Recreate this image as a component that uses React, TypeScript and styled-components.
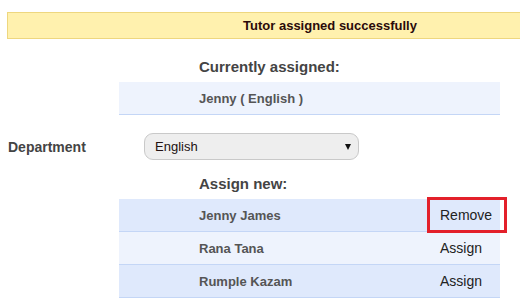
import React from 'react';
import styled, { createGlobalStyle } from 'styled-components';

const GlobalStyle = createGlobalStyle`
    html, body {
        margin: 0;
        padding: 0;
        background: #ffffff;
        overflow: hidden;
        font-family: "Liberation Sans", Arial, sans-serif;
    }
`;

const Page = styled.div`
    padding: 12px 0 0 7px;
    width: 520px;
    box-sizing: border-box;
`;

const Banner = styled.div`
    height: 25px;
    line-height: 25px;
    padding-left: 132px;
    background: #fff1ae;
    border: 1px solid #eed77f;
    border-right: none;
    text-align: center;
    font-size: 13px;
    font-weight: bold;
    color: #2a0a0a;
`;

const Block = styled.div<{ $top: number }>`
    margin: ${p => p.$top}px 0 0 112px;
    width: 381px;
`;

const Heading = styled.h3`
    margin: 0 0 7px 80px;
    font-size: 15px;
    line-height: 17px;
    font-weight: bold;
    color: #444444;
`;

const Row = styled.div<{ $shade: 'light' | 'dark' }>`
    display: flex;
    align-items: center;
    height: 32px;
    border-bottom: 1px solid #c4d6f6;
    background: ${p => (p.$shade === 'dark' ? '#dfe9fc' : '#eef3fd')};
`;

const Name = styled.span`
    flex-shrink: 0;
    width: 231px;
    padding-left: 80px;
    font-size: 13px;
    font-weight: bold;
    color: #555555;
`;

const Action = styled.button<{ $marked?: boolean }>`
    flex-shrink: 0;
    width: 74px;
    height: 30px;
    padding: 0 0 0 10px;
    margin-top: -1px;
    text-align: left;
    border: none;
    background: transparent;
    outline: ${p => (p.$marked ? '3px solid #e3202a' : 'none')};
    font-family: "Liberation Sans", Arial, sans-serif;
    font-size: 14px;
    color: #222222;
    cursor: pointer;
`;

const DeptRow = styled.div`
    display: flex;
    align-items: center;
    margin-top: 18px;
    margin-left: 1px;
`;

const DeptLabel = styled.label`
    width: 136px;
    font-size: 14px;
    font-weight: bold;
    color: #444444;
`;

const SelectWrap = styled.div`
    position: relative;
    width: 215px;
`;

const Select = styled.select`
    appearance: none;
    width: 215px;
    height: 27px;
    padding: 0 0 0 10px;
    border: 1px solid #c9c9c9;
    border-radius: 9px;
    background: #eeeeee;
    font-family: "Liberation Sans", Arial, sans-serif;
    font-size: 13px;
    color: #221111;
    outline: none;
`;

const Arrow = styled.span`
    position: absolute;
    right: 8px;
    top: 11px;
    width: 0;
    height: 0;
    border-left: 3.5px solid transparent;
    border-right: 3.5px solid transparent;
    border-top: 6px solid #111111;
    pointer-events: none;
`;

type Tutor = { name: string; action: string; marked?: boolean };

const tutors: Tutor[] = [
    { name: 'Jenny James', action: 'Remove', marked: true },
    { name: 'Rana Tana', action: 'Assign' },
    { name: 'Rumple Kazam', action: 'Assign' },
];

function App() {
    return (
        <Page>
            <GlobalStyle />
            <Banner>Tutor assigned successfully</Banner>

            <Block $top={19}>
                <Heading>Currently assigned:</Heading>
                <Row $shade="light">
                    <Name>Jenny ( English )</Name>
                </Row>
            </Block>

            <DeptRow>
                <DeptLabel>Department</DeptLabel>
                <SelectWrap>
                    <Select defaultValue="English">
                        <option>English</option>
                        <option>Maths</option>
                        <option>Science</option>
                    </Select>
                    <Arrow />
                </SelectWrap>
            </DeptRow>

            <Block $top={15}>
                <Heading>Assign new:</Heading>
                {tutors.map((t, i) => (
                    <Row key={t.name} $shade={i % 2 === 0 ? 'dark' : 'light'}>
                        <Name>{t.name}</Name>
                        <Action $marked={t.marked}>{t.action}</Action>
                    </Row>
                ))}
            </Block>
        </Page>
    );
}

export default App;
